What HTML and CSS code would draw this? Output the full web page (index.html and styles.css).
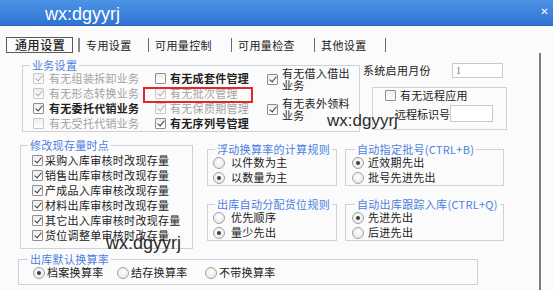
FILE: index.html
```html
<!DOCTYPE html>
<html>
<head>
<meta charset="utf-8">
<link rel="stylesheet" href="styles.css">
</head>
<body>
<div class="window">
  <div class="titlebar"><span class="title">wx:dgyyrj</span><span class="close">✕</span></div>
  <div class="tabs">
    <span class="tab active">通用设置</span>
    <span class="sep s1"></span>
    <span class="tab t2">专用设置</span>
    <span class="sep"></span>
    <span class="tab t3">可用量控制</span>
    <span class="sep"></span>
    <span class="tab t4">可用量检查</span>
    <span class="sep"></span>
    <span class="tab t5">其他设置</span>
    <span class="sep"></span>
  </div>
  <div class="page">
    <div class="row-a">
      <fieldset class="grp biz">
        <legend>业务设置</legend>
        <div class="biz-cols">
          <div class="bcol c1">
            <div class="opt dis"><span class="chk on"></span>有无组装拆卸业务</div>
            <div class="opt dis"><span class="chk on"></span>有无形态转换业务</div>
            <div class="opt strong"><span class="chk on"></span>有无委托代销业务</div>
            <div class="opt dis"><span class="chk"></span>有无受托代销业务</div>
          </div>
          <div class="bcol c2">
            <div class="opt strong"><span class="chk"></span>有无成套件管理</div>
            <div class="opt dis"><span class="chk on"></span>有无批次管理</div>
            <div class="opt dis"><span class="chk on"></span>有无保质期管理</div>
            <div class="opt strong"><span class="chk on"></span>有无序列号管理</div>
          </div>
          <div class="bcol c3">
            <div class="opt2"><span class="chk on"></span><span>有无借入借出<br>业务</span></div>
            <div class="opt2"><span class="chk on"></span><span>有无表外领料<br>业务</span></div>
          </div>
        </div>
      </fieldset>
      <div class="side">
        <div class="sys"><span class="lbl">系统启用月份</span><span class="inp month">1</span></div>
        <div class="remote">
          <div class="opt"><span class="chk"></span>有无远程应用</div>
          <div class="rid"><span class="lbl2">远程标识号</span><span class="inp rinp"></span></div>
        </div>
      </div>
    </div>

    <div class="row-b">
      <fieldset class="grp fix">
        <legend>修改现存量时点</legend>
        <div class="list">
          <div class="opt"><span class="chk on"></span>采购入库审核时改现存量</div>
          <div class="opt"><span class="chk on"></span>销售出库审核时改现存量</div>
          <div class="opt"><span class="chk on"></span>产成品入库审核改现存量</div>
          <div class="opt"><span class="chk on"></span>材料出库审核时改现存量</div>
          <div class="opt"><span class="chk on"></span>其它出入库审核时改现存量</div>
          <div class="opt"><span class="chk on"></span>货位调整单审核时改存量</div>
        </div>
      </fieldset>
      <div class="mid">
        <fieldset class="grp">
          <legend>浮动换算率的计算规则</legend>
          <div class="list rl">
            <div class="opt"><span class="radio"></span>以件数为主</div>
            <div class="opt"><span class="radio on"></span>以数量为主</div>
          </div>
        </fieldset>
        <fieldset class="grp second">
          <legend>出库自动分配货位规则</legend>
          <div class="list rl">
            <div class="opt"><span class="radio"></span>优先顺序</div>
            <div class="opt"><span class="radio on"></span>量少先出</div>
          </div>
        </fieldset>
      </div>
      <div class="rgt">
        <fieldset class="grp">
          <legend>自动指定批号(CTRL+B)</legend>
          <div class="list rr">
            <div class="opt"><span class="radio on"></span>近效期先出</div>
            <div class="opt"><span class="radio"></span>批号先进先出</div>
          </div>
        </fieldset>
        <fieldset class="grp second">
          <legend>自动出库跟踪入库(CTRL+Q)</legend>
          <div class="list rr">
            <div class="opt"><span class="radio on"></span>先进先出</div>
            <div class="opt"><span class="radio"></span>后进先出</div>
          </div>
        </fieldset>
      </div>
    </div>

    <fieldset class="grp conv">
      <legend>出库默认换算率</legend>
      <div class="conv-row">
        <div class="opt w1"><span class="radio on"></span>档案换算率</div>
        <div class="opt w2"><span class="radio"></span>结存换算率</div>
        <div class="opt"><span class="radio"></span>不带换算率</div>
      </div>
    </fieldset>
  </div>

  <div class="redbox"></div>
  <div class="wm wm1">wx:dgyyrj</div>
  <div class="wm wm2">wx:dgyyrj</div>
</div>
</body>
</html>
```

FILE: styles.css
```css
* { box-sizing: border-box; }
html, body { margin: 0; padding: 0; }
body {
  width: 553px;
  height: 290px;
  overflow: hidden;
  background: #fbfbfb;
  font-family: "Noto Sans CJK SC", "Noto Sans", sans-serif;
  font-size: 11px;
  letter-spacing: 0.3px;
  color: #222;
}
.window { position: relative; width: 553px; height: 290px; background: #fbfbfb; }

.titlebar {
  height: 26px;
  background: linear-gradient(#4c94e6, #3073d3);
  border-bottom: 1px solid #2c66bf;
  display: flex;
  justify-content: space-between;
  align-items: flex-start;
}
.title {
  margin-left: 45px;
  padding-top: 4px;
  font-family: "Liberation Sans", Arial, sans-serif;
  font-size: 18px;
  line-height: 20px;
  letter-spacing: 0;
  color: #fff;
}
.close {
  margin: 7px 4px 0 0;
  color: #fff;
  font-family: "DejaVu Sans", sans-serif;
  font-weight: bold;
  font-size: 10px;
  line-height: 10px;
}

.tabs {
  height: 27px;
  padding: 11px 0 0 6px;
  display: flex;
  align-items: flex-start;
  font-size: 11px;
  letter-spacing: 0.4px;
}
.tab { height: 16px; line-height: 16px; padding-left: 6px; white-space: nowrap; }
.tab.active {
  width: 67px;
  padding-left: 8px;
  border: 1px solid #5a5a5a;
  font-size: 12px;
  font-weight: 500;
  letter-spacing: 0.6px;
  line-height: 14px;
}
.sep { width: 1px; height: 14px; margin-top: 1px; background: #6a6a6a; }
.s1 { margin-left: 5px; width: 2px; background: #8a8a8a; }
.t2 { width: 68px; }
.t3 { width: 82px; }
.t4 { width: 82px; }
.t5 { width: 70px; }

.page {
  width: 541px;
  height: 237px;
  padding-top: 6px;
  border-right: 2px solid #7d7d7d;
}

.grp {
  margin: 0;
  padding: 0;
  min-width: 0;
  border: 1px solid #cdd1da;
}
.grp legend {
  padding: 0 2px;
  margin-left: 7px;
  line-height: 12px;
  color: #4c7fe2;
}

.opt {
  display: flex;
  align-items: center;
  gap: 5px;
  height: 15px;
  line-height: 15px;
  white-space: nowrap;
}
.strong { font-weight: 600; }
.dis { color: #a3a3a3; }

.chk {
  position: relative;
  flex: none;
  width: 11px;
  height: 11px;
  border: 1px solid #8f8f8f;
  border-radius: 1px;
  background: linear-gradient(#ededed, #ffffff);
}
.chk.on::after {
  content: "";
  position: absolute;
  left: 3px;
  top: 0px;
  width: 3px;
  height: 6px;
  border: solid #3a3a3a;
  border-width: 0 1.5px 1.5px 0;
  transform: rotate(40deg);
}
.dis .chk { border-color: #c9c9c9; }
.dis .chk.on::after { border-color: #b0b0b0; }

.radio {
  position: relative;
  flex: none;
  width: 12px;
  height: 12px;
  border-radius: 50%;
  border: 1px solid #a2a2a2;
  background: radial-gradient(circle at 50% 40%, #ffffff, #e2e2e2);
}
.radio.on::after {
  content: "";
  position: absolute;
  left: 3px;
  top: 3px;
  width: 4px;
  height: 4px;
  border-radius: 50%;
  background: #3d3d3d;
}

/* Row A */
.row-a { display: flex; align-items: flex-start; }
.biz { margin-left: 22px; width: 338px; }
.biz legend { margin-left: 7px; }
.biz-cols { display: flex; height: 60px; }
.c1 { width: 132px; padding-left: 10px; }
.c2 { width: 112px; }
.c3 { flex: 1; margin-top: -4px; }
.c2 .opt { gap: 4px; }
.opt2 { display: flex; align-items: center; gap: 4px; line-height: 12px; white-space: nowrap; }
.opt2 + .opt2 { margin-top: 6px; }

.side { margin-left: 3px; }
.sys { display: flex; margin-top: 4px; height: 15px; line-height: 15px; }
.lbl { width: 89px; white-space: nowrap; }
.inp { display: block; flex: none; background: #fff; border: 1px solid #c9c9c9; }
.month { width: 51px; height: 15px; padding-left: 3px; font-family: "Liberation Serif", serif; font-size: 10px; line-height: 13px; color: #777; }
.remote {
  margin: 9px 0 0 9px;
  width: 135px;
  height: 43px;
  border: 1px solid #cdd1da;
  padding-left: 12px;
}
.remote .opt { gap: 4px; }
.rid { display: flex; align-items: center; margin-top: 2px; padding-left: 10px; height: 17px; }
.lbl2 { flex: none; width: 55px; white-space: nowrap; letter-spacing: 0; }
.rinp { width: 43px; height: 17px; }

/* Row B */
.row-b { display: flex; align-items: flex-start; }
.fix { margin: 7px 0 0 20px; width: 173px; }
.fix .list { padding: 2px 0 5px 11px; }
.fix .opt { gap: 2px; }
.mid { margin: 11px 0 0 14px; width: 130px; display: flex; flex-direction: column; }
.rgt { margin: 11px 0 0 8px; width: 159px; display: flex; flex-direction: column; }
.rgt legend { margin-left: 9px; }
.second { margin-top: 12px; }
.rl { padding-left: 5px; }
.rl .opt { gap: 6px; }
.rr { padding-left: 6px; }
.rr .opt { gap: 4px; }

/* Row C */
.conv { margin: 4px 0 0 18px; width: 460px; }
.conv legend { margin-left: 9px; }
.conv-row { display: flex; padding: 0 0 4px 14px; }
.conv-row .opt { gap: 2px; }
.w1 { width: 84px; }
.w2 { width: 88px; }

/* overlays */
.redbox {
  position: absolute;
  left: 143px;
  top: 87px;
  width: 110px;
  height: 16px;
  border: 2px solid #e0272c;
}
.wm {
  position: absolute;
  font-family: "Liberation Sans", Arial, sans-serif;
  letter-spacing: 0;
  color: #2b2b2b;
  white-space: nowrap;
}
.wm1 { left: 327px; top: 112px; font-size: 17px; line-height: 17px; }
.wm2 { left: 106px; top: 234px; font-size: 18px; line-height: 18px; }
```
